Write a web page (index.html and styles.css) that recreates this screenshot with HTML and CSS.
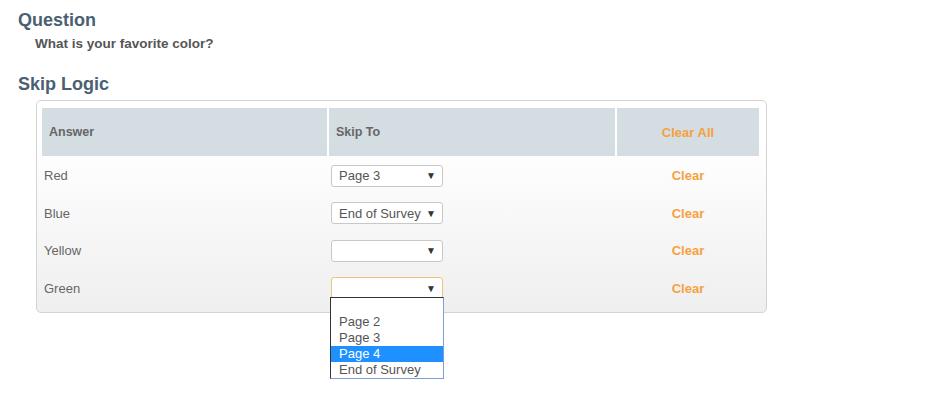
FILE: index.html
```html
<!DOCTYPE html>
<html>
  <head>
    <title>Skip Logic</title>
    <link rel="stylesheet" href="styles.css">
  </head>
  <body>
    <h2 class="title">Question</h2>
    <p class="question">What is your favorite color?</p>
    <h2 class="title skip-title">Skip Logic</h2>

    <div class="panel">
      <div class="grid head">
        <div class="cell">Answer</div>
        <div class="cell">Skip To</div>
        <div class="cell action">Clear All</div>
      </div>

      <div class="rows">
        <div class="grid row">
          <div class="cell">Red</div>
          <div class="cell"><div class="picker"><span>Page 3</span><i>&#9660;</i></div></div>
          <div class="cell action">Clear</div>
        </div>
        <div class="grid row">
          <div class="cell">Blue</div>
          <div class="cell"><div class="picker"><span>End of Survey</span><i>&#9660;</i></div></div>
          <div class="cell action">Clear</div>
        </div>
        <div class="grid row">
          <div class="cell">Yellow</div>
          <div class="cell"><div class="picker"><span></span><i>&#9660;</i></div></div>
          <div class="cell action">Clear</div>
        </div>
        <div class="grid row">
          <div class="cell">Green</div>
          <div class="cell">
            <div class="dropdown">
              <div class="picker open"><span></span><i>&#9660;</i></div>
              <div class="options">
                <div class="option">&nbsp;</div>
                <div class="option">Page 2</div>
                <div class="option">Page 3</div>
                <div class="option selected">Page 4</div>
                <div class="option">End of Survey</div>
              </div>
            </div>
          </div>
          <div class="cell action">Clear</div>
        </div>
      </div>
    </div>
  </body>
</html>
```

FILE: styles.css
```css
body {
  box-sizing: border-box;
  min-height: 396px;
  margin: 0;
  padding: 9px 0 0 18px;
  font-family: "Liberation Sans", Arial, sans-serif;
  background: #fff;
}

.title {
  margin: 0;
  font-size: 18px;
  line-height: 22px;
  font-weight: bold;
  color: #4b5f71;
}

.question {
  margin: 5px 0 0 17px;
  font-size: 13.5px;
  line-height: 16px;
  font-weight: bold;
  color: #555;
}

.skip-title {
  margin-top: 21px;
}

.panel {
  box-sizing: border-box;
  width: 731px;
  margin: 5px 0 0 18px;
  padding: 7px 7px 5px 5px;
  border: 1px solid #d4d4d4;
  border-radius: 5px;
  background: linear-gradient(#fff 20%, #efefef);
}

.grid {
  display: grid;
  grid-template-columns: 285px 286px 142px;
  column-gap: 2px;
}

.head {
  height: 48px;
}

.head .cell {
  background: #d3dde2;
  padding-left: 7px;
  font-size: 12.5px;
  font-weight: bold;
  color: #666;
  display: flex;
  align-items: center;
}

.rows {
  padding-top: 1px;
}

.row {
  height: 37.5px;
}

.row .cell {
  display: flex;
  align-items: center;
  padding-left: 2px;
  font-size: 13px;
  color: #666;
}

.head .cell.action,
.row .cell.action {
  justify-content: center;
  padding-left: 0;
  color: #f7a03e;
  font-weight: bold;
  font-size: 13px;
}

.dropdown {
  position: relative;
}

.picker {
  box-sizing: border-box;
  width: 112px;
  height: 22px;
  padding: 0 6px 0 7px;
  border: 1px solid #c8c8c8;
  border-radius: 3px;
  background: #fff;
  display: flex;
  align-items: center;
  justify-content: space-between;
  font-size: 13px;
  color: #555;
}

.picker i {
  font-style: normal;
  font-size: 10px;
  color: #333;
}

.picker.open {
  border-color: #f0c27e;
}

.options {
  position: absolute;
  top: 20px;
  left: -1px;
  width: 114px;
  box-sizing: border-box;
  background: #fff;
  border: 1px solid #7f9ed6;
  border-top-color: #333;
  border-left-color: #333;
  z-index: 2;
}

.option {
  height: 16px;
  line-height: 15px;
  padding-left: 8px;
  font-size: 13px;
  color: #555;
  white-space: nowrap;
}

.option.selected {
  background: #1e90ff;
  color: #fff;
}
```
